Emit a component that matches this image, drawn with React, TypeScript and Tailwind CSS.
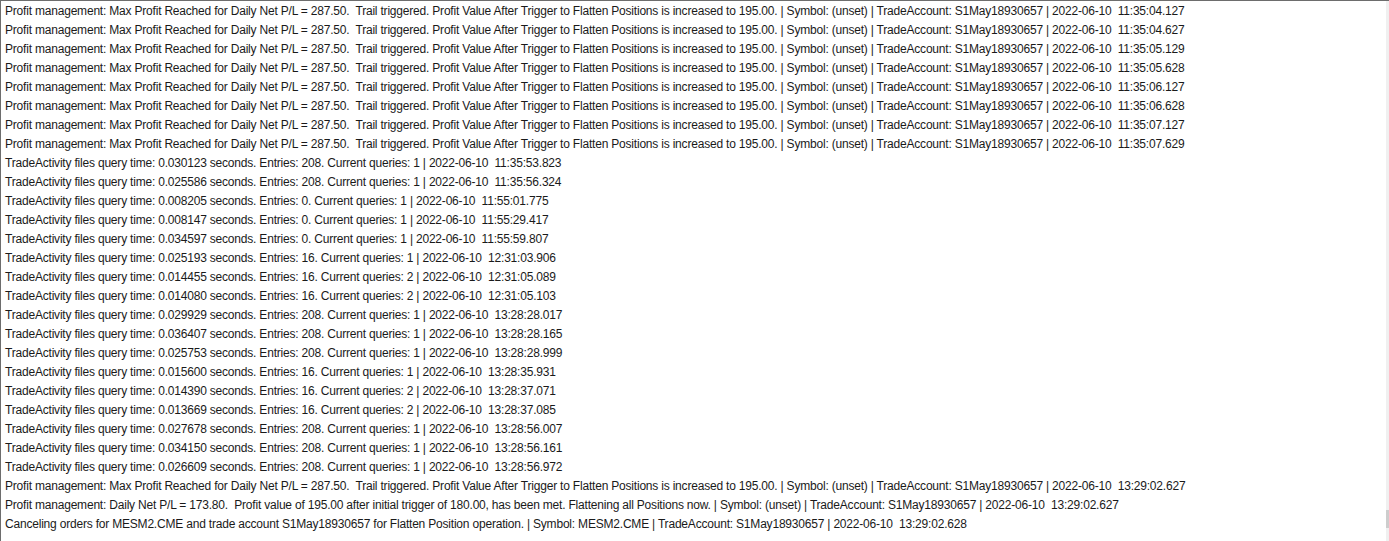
const profitTrail = (t: string) =>
  `Profit management: Max Profit Reached for Daily Net P/L = 287.50.  Trail triggered. Profit Value After Trigger to Flatten Positions is increased to 195.00. | Symbol: (unset) | TradeAccount: S1May18930657 | 2022-06-10  ${t}`;

const query = (secs: string, entries: string, q: string, t: string) =>
  `TradeActivity files query time: ${secs} seconds. Entries: ${entries}. Current queries: ${q} | 2022-06-10  ${t}`;

const lines = [
  profitTrail("11:35:04.127"),
  profitTrail("11:35:04.627"),
  profitTrail("11:35:05.129"),
  profitTrail("11:35:05.628"),
  profitTrail("11:35:06.127"),
  profitTrail("11:35:06.628"),
  profitTrail("11:35:07.127"),
  profitTrail("11:35:07.629"),
  query("0.030123", "208", "1", "11:35:53.823"),
  query("0.025586", "208", "1", "11:35:56.324"),
  query("0.008205", "0", "1", "11:55:01.775"),
  query("0.008147", "0", "1", "11:55:29.417"),
  query("0.034597", "0", "1", "11:55:59.807"),
  query("0.025193", "16", "1", "12:31:03.906"),
  query("0.014455", "16", "2", "12:31:05.089"),
  query("0.014080", "16", "2", "12:31:05.103"),
  query("0.029929", "208", "1", "13:28:28.017"),
  query("0.036407", "208", "1", "13:28:28.165"),
  query("0.025753", "208", "1", "13:28:28.999"),
  query("0.015600", "16", "1", "13:28:35.931"),
  query("0.014390", "16", "2", "13:28:37.071"),
  query("0.013669", "16", "2", "13:28:37.085"),
  query("0.027678", "208", "1", "13:28:56.007"),
  query("0.034150", "208", "1", "13:28:56.161"),
  query("0.026609", "208", "1", "13:28:56.972"),
  profitTrail("13:29:02.627"),
  "Profit management: Daily Net P/L = 173.80.  Profit value of 195.00 after initial trigger of 180.00, has been met. Flattening all Positions now. | Symbol: (unset) | TradeAccount: S1May18930657 | 2022-06-10  13:29:02.627",
  "Canceling orders for MESM2.CME and trade account S1May18930657 for Flatten Position operation. | Symbol: MESM2.CME | TradeAccount: S1May18930657 | 2022-06-10  13:29:02.628",
];

export default function App() {
  return (
    <div className="w-[1389px] h-[541px] bg-white flex border-t border-l border-[#6d6d6d] overflow-hidden">
      {/* log list */}
      <div className="flex-1 pt-px pl-[4px] font-['Liberation_Sans',Arial,sans-serif] text-[12px] tracking-[-0.2px] text-[#1a1a1a]">
        {lines.map((l, i) => (
          <div key={i} className="h-[19px] leading-[19px] whitespace-pre">
            {l}
          </div>
        ))}
      </div>

      {/* scrollbar */}
      <div className="w-[3px] bg-[#f0f0f0] flex flex-col">
        <div className="h-[509px]" />
        <div className="h-[18px] bg-[#cdcdcd]" />
      </div>
    </div>
  );
}
